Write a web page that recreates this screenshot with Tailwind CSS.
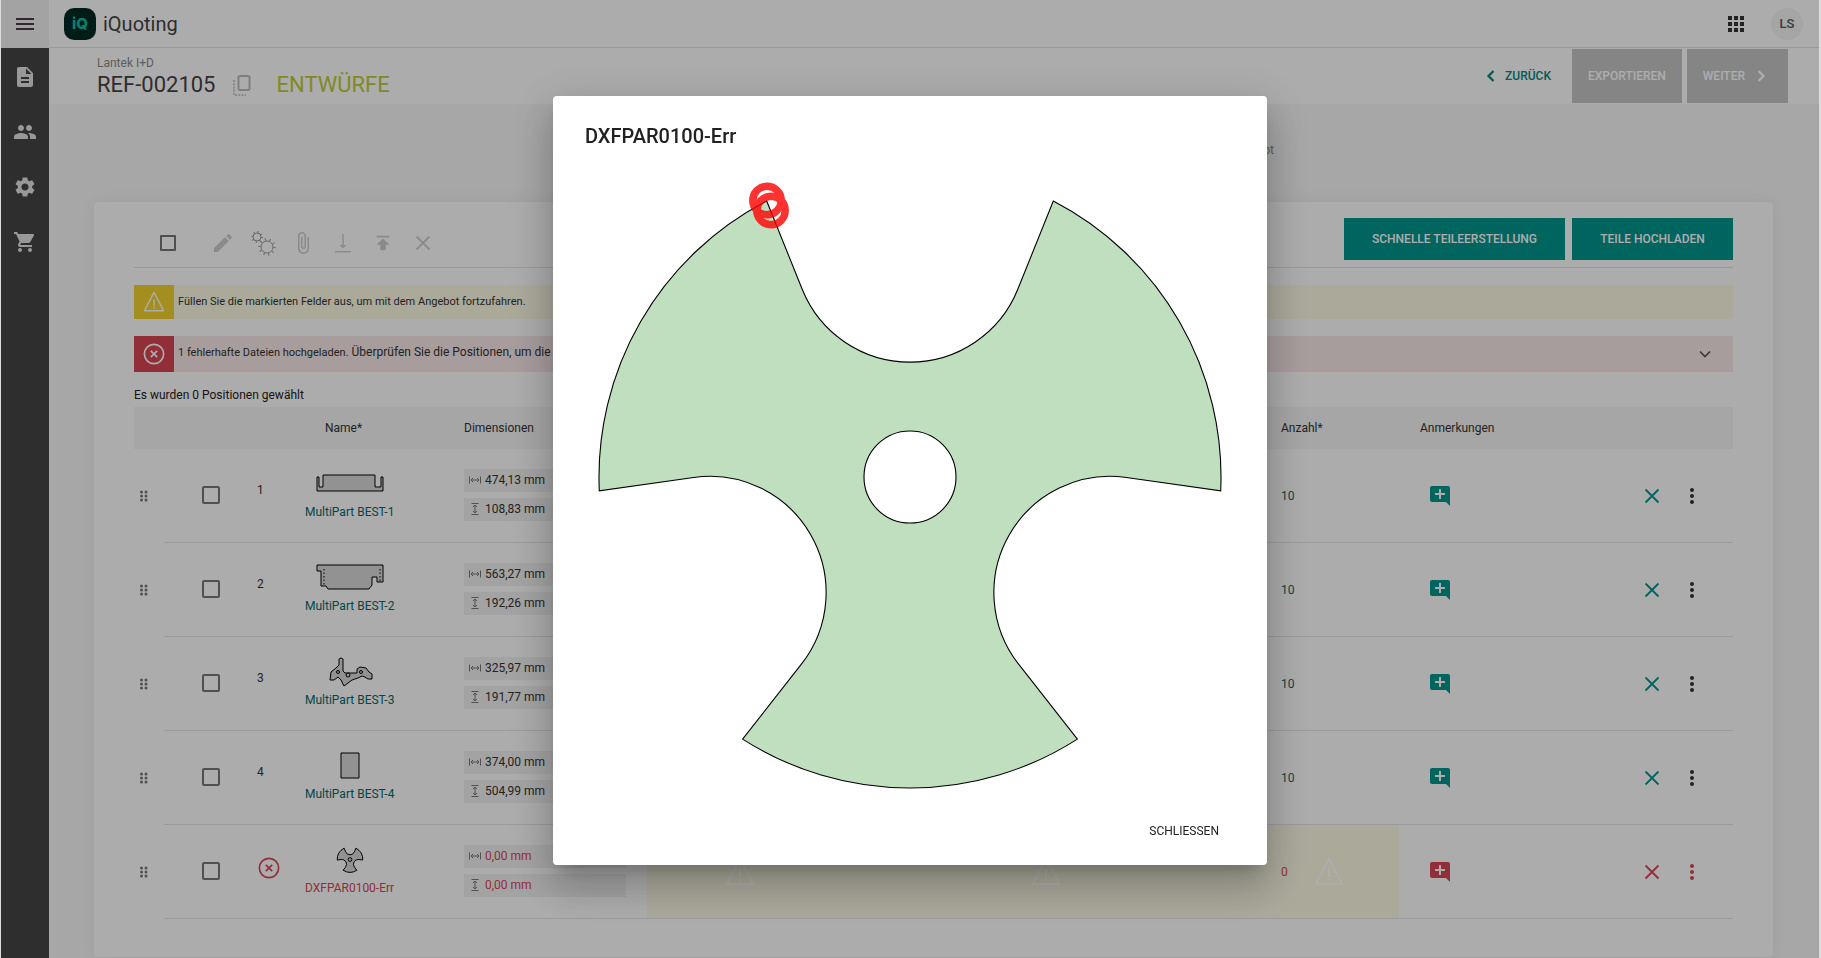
<!DOCTYPE html>
<html lang="de">
<head>
  <meta charset="UTF-8">
  <meta name="viewport" content="width=device-width, initial-scale=1.0">
  <title>iQuoting</title>
  <script src="https://cdn.jsdelivr.net/npm/@tailwindcss/browser@4"></script>
</head>
<body class="bg-[#dcdcdc] font-['Roboto',sans-serif] text-xs text-[#333]">
  <!-- Icons -->
  <svg class="hidden">
    <symbol id="i-menu" viewBox="0 0 24 24"><path d="M3 18h18v-2H3v2zm0-5h18v-2H3v2zm0-7v2h18V6H3z"/></symbol>
    <symbol id="i-doc" viewBox="0 0 24 24"><path d="M14 2H6c-1.1 0-1.99.9-1.99 2L4 20c0 1.1.89 2 1.99 2H18c1.1 0 2-.9 2-2V8l-6-6zm2 16H8v-2h8v2zm0-4H8v-2h8v2zm-3-5V3.500L18.500 9H13z"/></symbol>
    <symbol id="i-people" viewBox="0 0 24 24"><path d="M16 11c1.660 0 2.990-1.340 2.990-3S17.660 5 16 5c-1.660 0-3 1.340-3 3s1.340 3 3 3zm-8 0c1.660 0 2.990-1.340 2.990-3S9.660 5 8 5C6.340 5 5 6.340 5 8s1.340 3 3 3zm0 2c-2.330 0-7 1.170-7 3.500V19h14v-2.500c0-2.330-4.670-3.500-7-3.500zm8 0c-.29 0-.62.02-.97.05 1.160.84 1.970 1.970 1.970 3.450V19h6v-2.500c0-2.330-4.670-3.500-7-3.500z"/></symbol>
    <symbol id="i-settings" viewBox="0 0 24 24"><path d="M19.14 12.94c.04-.3.06-.61.06-.94 0-.32-.02-.64-.07-.94l2.030-1.580c.18-.14.23-.41.12-.61l-1.920-3.320c-.12-.22-.37-.29-.59-.22l-2.390.96c-.5-.38-1.030-.7-1.620-.94l-.36-2.540c-.04-.24-.24-.41-.48-.41h-3.840c-.24 0-.43.17-.47.41l-.36 2.540c-.59.24-1.130.57-1.620.94l-2.390-.96c-.22-.08-.47 0-.59.22L2.740 8.870c-.12.21-.08.47.12.61l2.030 1.580c-.05.3-.09.63-.09.94s.02.64.07.94l-2.030 1.580c-.18.14-.23.41-.12.61l1.920 3.320c.12.22.37.29.59.22l2.390-.96c.5.38 1.030.7 1.620.94l.36 2.540c.05.24.24.41.48.41h3.840c.24 0 .44-.17.47-.41l.36-2.540c.59-.24 1.130-.56 1.620-.94l2.390.96c.22.08.47 0 .59-.22l1.920-3.320c.12-.22.07-.47-.12-.61l-2.010-1.580zM12 15.600c-1.980 0-3.600-1.620-3.600-3.600s1.620-3.600 3.600-3.600 3.600 1.620 3.600 3.600-1.620 3.600-3.600 3.600z"/></symbol>
    <symbol id="i-cart" viewBox="0 0 24 24"><path d="M7 18c-1.100 0-1.990.9-1.990 2S5.900 22 7 22s2-.9 2-2-.9-2-2-2zM1 2v2h2l3.600 7.590-1.350 2.450c-.16.28-.25.61-.25.96 0 1.100.9 2 2 2h12v-2H7.420c-.14 0-.25-.11-.25-.25l.03-.12.900-1.630h7.450c.75 0 1.410-.41 1.750-1.030l3.580-6.490c.08-.14.12-.31.12-.48 0-.55-.45-1-1-1H5.210l-.94-2H1zm16 16c-1.100 0-1.990.9-1.990 2s.89 2 1.990 2 2-.9 2-2-.9-2-2-2z"/></symbol>
    <symbol id="i-apps" viewBox="0 0 24 24"><path d="M4 8h4V4H4v4zm6 12h4v-4h-4v4zm-6 0h4v-4H4v4zm0-6h4v-4H4v4zm6 0h4v-4h-4v4zm6-10v4h4V4h-4zm-6 4h4V4h-4v4zm6 6h4v-4h-4v4zm0 6h4v-4h-4v4z"/></symbol>
    <symbol id="i-copy" viewBox="0 0 18 21"><g fill="none" stroke="currentColor" stroke-width="2"><rect x="5.500" y="1" width="11" height="14" rx="1.500"/><path d="M1 5v15h12" stroke-width="1.500" stroke-dasharray="2 1.200"/></g></symbol>
    <symbol id="i-edit" viewBox="0 0 24 24"><path d="M3 17.250V21h3.750L17.810 9.940l-3.750-3.750L3 17.250zM20.710 7.040c.39-.39.39-1.020 0-1.410l-2.340-2.340c-.39-.39-1.020-.39-1.410 0l-1.830 1.830 3.750 3.750 1.830-1.830z"/></symbol>
    <symbol id="i-gears" viewBox="0 0 26 26"><g fill="none" stroke="currentColor"><circle cx="7" cy="7" r="4"/><circle cx="7" cy="7" r="5" stroke-width="2" stroke-dasharray="1 2.927"/><circle cx="17" cy="17" r="6"/><circle cx="17" cy="17" r="7.500" stroke-width="2.500" stroke-dasharray="1 3.712"/></g></symbol>
    <symbol id="i-clip" viewBox="0 0 24 24"><path d="M16.500 6v11.500c0 2.210-1.790 4-4 4s-4-1.790-4-4V5a2.500 2.500 0 0 1 5 0v10.500c0 .55-.45 1-1 1s-1-.45-1-1V6H10v9.500a2.500 2.500 0 0 0 5 0V5c0-2.210-1.790-4-4-4S7 2.790 7 5v12.500c0 3.040 2.460 5.500 5.500 5.500s5.500-2.460 5.500-5.500V6h-1.500z"/></symbol>
    <symbol id="i-down" viewBox="0 0 24 24"><path d="M4 20h16v1.500H4zM11.300 3h1.400v11h2.800L12 17.500 8.500 14h2.800z"/></symbol>
    <symbol id="i-up" viewBox="0 0 24 24"><path d="M5 4v2h14V4H5zm0 10h4v6h6v-6h4l-7-7-7 7z"/></symbol>
    <symbol id="i-x" viewBox="0 0 24 24"><path d="M5.500 5.500l13 13M18.500 5.500l-13 13" fill="none" stroke="currentColor" stroke-width="1.800"/></symbol>
    <symbol id="i-left" viewBox="0 0 24 24"><path d="M15 6l-6 6 6 6" fill="none" stroke="currentColor" stroke-width="2.800"/></symbol>
    <symbol id="i-right" viewBox="0 0 24 24"><path d="M9 6l6 6-6 6" fill="none" stroke="currentColor" stroke-width="2.800"/></symbol>
    <symbol id="i-expand" viewBox="0 0 24 24"><path d="M6 9l6 6 6-6" fill="none" stroke="currentColor" stroke-width="2"/></symbol>
    <symbol id="i-warn" viewBox="0 0 24 24"><g fill="none" stroke="currentColor" stroke-width="1.500" stroke-linejoin="round"><path d="M12 1.500L22.500 21.500H1.500z"/><path d="M12 9v7M12 17.500v1.800"/></g></symbol>
    <symbol id="i-error" viewBox="0 0 24 24"><g fill="none" stroke="currentColor" stroke-width="1.800"><circle cx="12" cy="12" r="10.500"/><path d="M8.500 8.500l7 7M15.500 8.500l-7 7"/></g></symbol>
    <symbol id="i-drag" viewBox="0 0 24 24"><g><circle cx="7" cy="4" r="3"/><circle cx="16" cy="4" r="3"/><circle cx="7" cy="12" r="3"/><circle cx="16" cy="12" r="3"/><circle cx="7" cy="20" r="3"/><circle cx="16" cy="20" r="3"/></g></symbol>
    <symbol id="i-comment" viewBox="0 0 24 24"><path d="M22 4c0-1.100-.9-2-2-2H4c-1.100 0-2 .9-2 2v12c0 1.100.9 2 2 2h14l4 4V4zm-5 7h-4v4h-2v-4H7V9h4V5h2v4h4v2z"/></symbol>
    <symbol id="i-more" viewBox="0 0 24 24"><path d="M12 8c1.100 0 2-.9 2-2s-.9-2-2-2-2 .9-2 2 .9 2 2 2zm0 2c-1.100 0-2 .9-2 2s.9 2 2 2 2-.9 2-2-.9-2-2-2zm0 6c-1.100 0-2 .9-2 2s.9 2 2 2 2-.9 2-2-.9-2-2-2z"/></symbol>
    <symbol id="i-width" viewBox="0 0 12 12"><path d="M.5 2.500v7M11.500 2.500v7M2 6h8M4 4L2 6l2 2M8 4l2 2-2 2" fill="none" stroke="currentColor"/></symbol>
    <symbol id="i-height" viewBox="0 0 12 12"><path d="M2.500 .5h7M2.500 11.500h7M6 2v8M4 4l2-2 2 2M4 8l2 2 2-2" fill="none" stroke="currentColor"/></symbol>
  </svg>

  <div class="ml-px mr-0.5 flex min-h-screen flex-col bg-[#f6f6f6]">
    <header class="flex h-12 items-center bg-[#fefefe]">
      <button class="flex h-12 w-12 items-center justify-center bg-[#f0f0f0]" aria-label="Menü"><svg class="h-6 w-6 fill-[#4a3f48]"><use href="#i-menu"/></svg></button>
      <div class="flex h-12 flex-1 items-center border-b border-[#e4e4e4] pl-[15px] pr-4">
        <span class="flex h-8 w-8 items-center justify-center rounded-[10px] bg-[#002a26] font-['Inter',sans-serif] text-[15px] font-extrabold leading-none text-[#14b8a6]">iQ</span>
        <span class="ml-[7px] text-xl text-[#444]">iQuoting</span>
        <button class="ml-auto" aria-label="Apps"><svg class="h-6 w-6 fill-[#333]"><use href="#i-apps"/></svg></button>
        <span class="ml-[23px] flex h-8 w-8 items-center justify-center rounded-full bg-[#f3f3f3] text-[13px] font-medium text-[#555]">LS</span>
      </div>
    </header>

    <div class="flex flex-1">
      <nav class="flex w-12 flex-col bg-[#444] pt-px text-[#e0e0e0]">
        <a href="#" class="flex h-[55px] items-center justify-center" aria-label="Angebote"><svg class="h-6 w-6 fill-current"><use href="#i-doc"/></svg></a>
        <a href="#" class="flex h-[55px] items-center justify-center" aria-label="Kunden"><svg class="h-6 w-6 fill-current"><use href="#i-people"/></svg></a>
        <a href="#" class="flex h-[55px] items-center justify-center" aria-label="Einstellungen"><svg class="h-6 w-6 fill-current"><use href="#i-settings"/></svg></a>
        <a href="#" class="flex h-[55px] items-center justify-center" aria-label="Einkauf"><svg class="h-6 w-6 fill-current"><use href="#i-cart"/></svg></a>
      </nav>

      <main class="min-w-0 flex-1">
        <div class="flex h-14 items-center bg-[#fefefe] pl-12 pr-[31px]">
          <div class="pt-0.5">
            <p class="leading-4 text-[#8a8a8a]">Lantek I+D</p>
            <div class="flex items-center text-[22px] leading-7">
              <h1 class="text-[#444]">REF-002105</h1>
              <button class="ml-[17px]" aria-label="Kopieren"><svg class="h-[21px] w-[18px] text-[#bbb]"><use href="#i-copy"/></svg></button>
              <span class="ml-[26px] text-[#c0ca33]">ENTWÜRFE</span>
            </div>
          </div>
          <div class="ml-auto flex items-center font-medium">
            <button class="mr-[21px] flex items-center gap-1 text-[#00897f]"><svg class="h-5 w-5"><use href="#i-left"/></svg>ZURÜCK</button>
            <button class="mr-[5px] h-[54px] bg-[#c5c5c5] px-4 text-white">EXPORTIEREN</button>
            <button class="flex h-[54px] items-center gap-1.5 bg-[#c5c5c5] pl-4 pr-[17px] text-white">WEITER <svg class="h-5 w-5"><use href="#i-right"/></svg></button>
          </div>
        </div>

        <div class="flex h-[98px] justify-end pr-[545px] pt-9 leading-5 text-[#888]"><span>Angebot</span></div>

        <section class="ml-[45px] mr-[46px] rounded bg-[#fefefe] px-10 pb-[38px] pt-4 shadow-[0_0_16px_rgba(0,0,0,0.06)]">
          <div class="flex h-[50px] border-b border-[#e2e2e2] pb-[7px]">
            <div class="flex flex-1 items-center pt-2 text-[#ccc]">
              <input type="checkbox" aria-label="Alle wählen" class="ml-[26px] mr-[27px] h-4 w-4 appearance-none rounded-[1px] border-2 border-[#777]">
              <button class="flex w-10 justify-center" aria-label="Bearbeiten"><svg class="h-6 w-6 fill-current"><use href="#i-edit"/></svg></button>
              <button class="flex w-10 justify-center text-[#999]" aria-label="Parameter"><svg class="h-[26px] w-[26px]"><use href="#i-gears"/></svg></button>
              <button class="flex w-10 justify-center" aria-label="Anhang"><svg class="h-6 w-6 fill-current"><use href="#i-clip"/></svg></button>
              <button class="flex w-10 justify-center" aria-label="Herunterladen"><svg class="h-6 w-6 fill-current"><use href="#i-down"/></svg></button>
              <button class="flex w-10 justify-center" aria-label="Hochladen"><svg class="h-[22px] w-[22px] fill-current"><use href="#i-up"/></svg></button>
              <button class="flex w-10 justify-center" aria-label="Löschen"><svg class="h-6 w-6"><use href="#i-x"/></svg></button>
            </div>
            <button class="mr-[7px] w-[221px] bg-[#00958d] font-medium text-white">SCHNELLE TEILEERSTELLUNG</button>
            <button class="w-[161px] bg-[#00958d] font-medium text-white">TEILE HOCHLADEN</button>
          </div>

          <div class="mt-[17px] flex h-[34px] items-center bg-[#fbf9e4]">
            <span class="mr-1 flex h-full w-10 items-center justify-center bg-[#f1d22e] text-[#fefefe]"><svg class="h-[22px] w-[22px]"><use href="#i-warn"/></svg></span>
            <p class="text-[11px]">Füllen Sie die markierten Felder aus, um mit dem Angebot fortzufahren.</p>
          </div>
          <div class="mt-[17px] flex h-9 items-center bg-[#f8e7e8]">
            <span class="mr-1 flex h-full w-10 items-center justify-center bg-[#d74552] text-[#fefefe]"><svg class="h-[22px] w-[22px]"><use href="#i-error"/></svg></span>
            <p class="pb-1"><span class="text-[11px]">1 fehlerhafte Dateien hochgeladen.</span> Überprüfen Sie die Positionen, um die Fehler zu sehen.</p>
            <button class="ml-auto mr-[18px]" aria-label="Aufklappen"><svg class="h-5 w-5 text-[#555]"><use href="#i-expand"/></svg></button>
          </div>

          <p class="pb-0.5 pt-[13px] leading-5 text-[#222]">Es wurden 0 Positionen gewählt</p>

          <table class="w-full table-fixed border-separate border-spacing-0">
            <colgroup>
              <col class="w-[30px]"><col class="w-[93px]"><col class="w-10"><col class="w-[167px]"><col class="w-[183px]">
              <col><col class="w-[318px]"><col class="w-32"><col class="w-[233px]"><col class="w-[101px]">
            </colgroup>
            <thead>
              <tr class="h-[42px] bg-[#f5f5f5] text-left">
                <th></th><th></th><th></th>
                <th class="pl-7 font-normal">Name*</th>
                <th class="font-normal">Dimensionen</th>
                <th></th><th></th>
                <th class="pl-2.5 font-normal">Anzahl*</th>
                <th class="pl-[21px] font-normal">Anmerkungen</th>
                <th></th>
              </tr>
            </thead>
            <tbody id="rows"></tbody>
          </table>
        </section>
      </main>
    </div>
  </div>

  <!-- Dialog -->
  <div class="fixed inset-y-0 left-px right-0.5 flex items-center justify-center bg-black/32 pt-[3px]">
    <div role="dialog" aria-labelledby="dialog-title" class="w-[714px] rounded bg-white px-8 pb-4 pt-6 shadow-[0_11px_15px_-7px_rgba(0,0,0,0.2),0_24px_38px_3px_rgba(0,0,0,0.14),0_9px_46px_8px_rgba(0,0,0,0.12)]">
      <h2 id="dialog-title" class="text-xl font-medium leading-8 text-[#212121]">DXFPAR0100-Err</h2>
      <svg class="mx-auto mt-[5px] h-[640px] w-[640px]" viewBox="-320 -320 640 640">
        <path d="M-143.300-276L-107.800-187.700A116.200 116.200 0 0 0 107.800-187.700L143.300-276A311 311 0 0 1 310.700 13.900L216.400 .5A116.200 116.200 0 0 0 108.600 187.200L167.400 262.100A311 311 0 0 1-167.400 262.100L-108.600 187.200A116.200 116.200 0 0 0-216.400 .5L-310.700 13.900A311 311 0 0 1-143.300-276Z" fill="#c0dfbf" stroke="#000" stroke-width="1.100"/>
        <circle r="46" fill="#fff" stroke="#000" stroke-width="1.100"/>
        <g fill="none" stroke="#f00" stroke-width="7.500" opacity=".8">
          <circle cx="-143" cy="-276.500" r="14.200"/>
          <circle cx="-139" cy="-266.500" r="14.200"/>
        </g>
      </svg>
      <div class="mt-4 flex justify-end">
        <button class="h-9 px-4 text-[#212121]">SCHLIESSEN</button>
      </div>
    </div>
  </div>

  <script>
    const shapes = [
      '<path d="M1 11v14h66V11h-2v10h-6V9H7v12H3V11z"/>',
      '<path d="M1 5h66v17h-6v-5h-5v8l-3 4H12l-2-3H5V11H1z"/><path d="M8 9v17M64 9v13" stroke-dasharray="1.500 2"/>',
      '<path d="M15 18l5-4 3-3V5l2-1 2 1v12l2 2h12v-4l3-2 6 1 3 4 3 2v5h-4l-3-2-3-1-4 2-6 2-4 3-4 3-3-6-3-3-4 3h-4z"/><circle cx="22" cy="18" r="1.500"/><circle cx="32" cy="21" r="2"/><circle cx="45" cy="18" r="1.500"/>',
      '<path d="M25 5h18v25H25z"/>',
      '<g transform="translate(34 17.500) scale(.041)" stroke-width="24"><path d="M-143-276L-108-188A116 116 0 0 0 108-188L143-276A311 311 0 0 1 311 14L216 0A116 116 0 0 0 109 187L167 262A311 311 0 0 1-167 262L-109 187A116 116 0 0 0-216 0L-311 14A311 311 0 0 1-143-276Z"/><circle r="46"/></g>'
    ];
    const parts = [
      ['MultiPart BEST-1', '474,13', '108,83'],
      ['MultiPart BEST-2', '563,27', '192,26'],
      ['MultiPart BEST-3', '325,97', '191,77'],
      ['MultiPart BEST-4', '374,00', '504,99'],
      ['DXFPAR0100-Err', '0,00', '0,00']
    ];
    const line = 'border-b border-[#e2e6e6]';
    const icon = (id, cls) => `<svg class="${cls}"><use href="#i-${id}"/></svg>`;

    document.getElementById('rows').innerHTML = parts.map(([name, w, h], i) => {
      const err = i === 4; // Zeile mit fehlerhafter Datei
      const main = err ? 'text-[#d74552]' : 'text-[#00958d]';
      const warn = err ? 'bg-[#fbf9e4]' : '';
      const dim = (id, v) => `<div class="flex h-[23px] w-[162px] items-center bg-[#f1f1f1] pl-[5px] ${err ? 'text-[#d74552]' : ''}">${icon(id, 'mr-1 h-3 w-3 text-[#777]')}${v} mm</div>`;
      return `<tr class="h-[94px]">
        <td class="pl-1">${icon('drag', 'h-3 w-3 fill-[#777]')}</td>
        <td class="${line} pb-0.5"><input type="checkbox" aria-label="${name}" class="mx-auto block h-[18px] w-[18px] appearance-none rounded-xs border-2 border-[#777]"></td>
        <td class="${line} pb-3">${err ? icon('error', 'mt-1 ml-px h-[22px] w-[22px] text-[#d74552]') : i + 1}</td>
        <td class="${line} pb-1"><div class="inline-flex flex-col items-center pl-2">
          <svg class="h-[34px] w-[68px] fill-[#d8d8d8] stroke-black" viewBox="0 0 68 34">${shapes[i]}</svg>
          <a href="#" class="mt-0.5 leading-5 ${err ? 'text-[#d74552]' : 'text-[#006a68]'}">${name}</a></div></td>
        <td class="${line} pb-0.5"><div class="flex flex-col gap-1.5">${dim('width', w)}${dim('height', h)}</div></td>
        <td class="${line} ${warn}">${err ? icon('warn', 'ml-[78px] h-[30px] w-[30px] text-white') : ''}</td>
        <td class="${line} ${warn}">${err ? icon('warn', 'ml-[78px] h-[30px] w-[30px] text-white') : ''}</td>
        <td class="${line} ${warn} pl-2.5"><div class="flex items-center justify-between pr-[55px] ${err ? 'text-[#d74552]' : 'text-[#006a68]'}">${err ? '0' + icon('warn', 'h-[30px] w-[30px] text-white') : '10'}</div></td>
        <td class="${line} pl-[29px]"><button class="block" aria-label="Anmerkung">${icon('comment', 'h-6 w-6 fill-current ' + main)}</button></td>
        <td class="${line}"><div class="flex">
          <button class="flex w-10 justify-center ${main}" aria-label="Löschen">${icon('x', 'h-6 w-6')}</button>
          <button class="flex w-10 justify-center ${err ? 'text-[#d74552]' : 'text-[#333]'}" aria-label="Mehr">${icon('more', 'h-6 w-6 fill-current')}</button></div></td>
      </tr>`;
    }).join('');
  </script>
</body>
</html>
